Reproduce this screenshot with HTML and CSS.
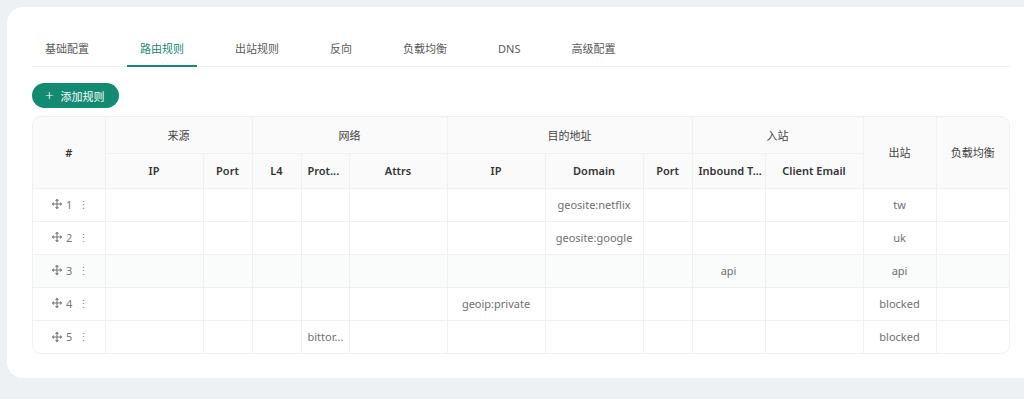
FILE: index.html
```html
<!DOCTYPE html>
<html lang="zh">
<head>
<meta charset="utf-8">
<link rel="stylesheet" href="styles.css">
</head>
<body>
<div class="card">
  <div class="tabs">
    <div class="tab">基础配置</div>
    <div class="tab active">路由规则</div>
    <div class="tab">出站规则</div>
    <div class="tab">反向</div>
    <div class="tab">负载均衡</div>
    <div class="tab">DNS</div>
    <div class="tab">高级配置</div>
  </div>
  <div class="toolbar">
    <button class="btn-add"><span class="plus">+</span>添加规则</button>
  </div>
  <div class="table-wrap">
    <table class="rules">
      <colgroup>
        <col style="width:72px"><col style="width:98px"><col style="width:49px">
        <col style="width:49px"><col style="width:48px"><col style="width:98px">
        <col style="width:98px"><col style="width:98px"><col style="width:49px">
        <col style="width:73px"><col style="width:98px"><col style="width:73px"><col style="width:73px">
      </colgroup>
      <thead>
        <tr class="h1">
          <th rowspan="2" class="hash">#</th>
          <th colspan="2">来源</th>
          <th colspan="3">网络</th>
          <th colspan="3">目的地址</th>
          <th colspan="2">入站</th>
          <th rowspan="2">出站</th>
          <th rowspan="2" class="last">负载均衡</th>
        </tr>
        <tr class="h2">
          <th>IP</th><th>Port</th><th>L4</th><th class="left">Prot...</th><th>Attrs</th>
          <th>IP</th><th>Domain</th><th>Port</th><th class="left">Inbound T...</th><th>Client Email</th>
        </tr>
      </thead>
      <tbody>
        <tr>
          <td class="idx"><span class="grp"><svg class="move" viewBox="0 0 10 10"><path d="M5 0.5V9.5M0.5 5H9.5"/><path d="M3.6 1.9L5 0.5L6.4 1.9M3.6 8.1L5 9.5L6.4 8.1M1.9 3.6L0.5 5L1.9 6.4M8.1 3.6L9.5 5L8.1 6.4"/></svg><span class="num">1</span><span class="dots">⋮</span></span></td>
          <td></td><td></td><td></td><td></td><td></td><td></td><td>geosite:netflix</td><td></td><td></td><td></td><td>tw</td><td class="last"></td>
        </tr>
        <tr>
          <td class="idx"><span class="grp"><svg class="move" viewBox="0 0 10 10"><path d="M5 0.5V9.5M0.5 5H9.5"/><path d="M3.6 1.9L5 0.5L6.4 1.9M3.6 8.1L5 9.5L6.4 8.1M1.9 3.6L0.5 5L1.9 6.4M8.1 3.6L9.5 5L8.1 6.4"/></svg><span class="num">2</span><span class="dots">⋮</span></span></td>
          <td></td><td></td><td></td><td></td><td></td><td></td><td>geosite:google</td><td></td><td></td><td></td><td>uk</td><td class="last"></td>
        </tr>
        <tr class="hover">
          <td class="idx"><span class="grp"><svg class="move" viewBox="0 0 10 10"><path d="M5 0.5V9.5M0.5 5H9.5"/><path d="M3.6 1.9L5 0.5L6.4 1.9M3.6 8.1L5 9.5L6.4 8.1M1.9 3.6L0.5 5L1.9 6.4M8.1 3.6L9.5 5L8.1 6.4"/></svg><span class="num">3</span><span class="dots">⋮</span></span></td>
          <td></td><td></td><td></td><td></td><td></td><td></td><td></td><td></td><td>api</td><td></td><td>api</td><td class="last"></td>
        </tr>
        <tr>
          <td class="idx"><span class="grp"><svg class="move" viewBox="0 0 10 10"><path d="M5 0.5V9.5M0.5 5H9.5"/><path d="M3.6 1.9L5 0.5L6.4 1.9M3.6 8.1L5 9.5L6.4 8.1M1.9 3.6L0.5 5L1.9 6.4M8.1 3.6L9.5 5L8.1 6.4"/></svg><span class="num">4</span><span class="dots">⋮</span></span></td>
          <td></td><td></td><td></td><td></td><td></td><td>geoip:private</td><td></td><td></td><td></td><td></td><td>blocked</td><td class="last"></td>
        </tr>
        <tr class="lastrow">
          <td class="idx"><span class="grp"><svg class="move" viewBox="0 0 10 10"><path d="M5 0.5V9.5M0.5 5H9.5"/><path d="M3.6 1.9L5 0.5L6.4 1.9M3.6 8.1L5 9.5L6.4 8.1M1.9 3.6L0.5 5L1.9 6.4M8.1 3.6L9.5 5L8.1 6.4"/></svg><span class="num">5</span><span class="dots">⋮</span></span></td>
          <td></td><td></td><td></td><td class="left">bittor...</td><td></td><td></td><td></td><td></td><td></td><td></td><td>blocked</td><td class="last"></td>
        </tr>
      </tbody>
    </table>
  </div>
</div>
</body>
</html>
```

FILE: styles.css
```css
* { box-sizing: border-box; }
html, body {
  margin: 0;
  padding: 0;
  background: #edf1f4;
  overflow: hidden;
  height: 399px;
}
body {
  font-family: "Noto Sans", "Noto Sans CJK SC", sans-serif;
  font-size: 11px;
  color: #555;
}
.card {
  margin: 7px 0 0 7px;
  width: 1040px;
  height: 371px;
  background: #fff;
  border-radius: 16px;
  padding: 25px 0 0 25px;
}
.tabs {
  display: flex;
  gap: 25px;
  width: 978px;
  height: 35px;
  border-bottom: 1px solid #eff0f1;
}
.tab {
  position: relative;
  padding: 0 13px;
  height: 34px;
  line-height: 34px;
  font-size: 11px;
  color: #5a5a5a;
  white-space: nowrap;
}
.tab.active {
  color: #148a73;
}
.tab.active::after {
  content: "";
  position: absolute;
  left: 0;
  right: 0;
  bottom: -1px;
  height: 2px;
  background: #148a73;
}
.toolbar {
  margin-top: 16px;
  height: 25px;
}
.btn-add {
  display: inline-flex;
  align-items: center;
  height: 25px;
  width: 87px;
  padding: 0 0 0 13px;
  border: none;
  border-radius: 13px;
  background: #138a72;
  color: #fff;
  font-family: "Noto Sans", "Noto Sans CJK SC", sans-serif;
  font-size: 11px;
}
.btn-add .plus {
  font-size: 15px;
  font-weight: 300;
  margin-right: 7px;
  line-height: 1;
}
.table-wrap {
  margin-top: 8px;
  width: 978px;
  border: 1px solid #eff0f1;
  border-radius: 9px;
  overflow: hidden;
}
.rules {
  width: 976px;
  table-layout: fixed;
  border-collapse: collapse;
}
.rules th, .rules td {
  border-right: 1px solid #f0f0f0;
  border-bottom: 1px solid #f0f0f0;
  text-align: center;
  padding: 0 6px;
  white-space: nowrap;
  overflow: hidden;
}
.rules th.last, .rules td.last { border-right: none; }
.rules tr.lastrow td { border-bottom: none; }
.rules th {
  background: #fafafa;
  color: #444;
  font-weight: 400;
  font-size: 11px;
}
.rules .h1 th { height: 36px; }
.rules .h2 th {
  height: 35px;
  font-weight: 600;
  color: #333;
}
.rules th.hash { font-weight: 600; color: #333; }
.rules td {
  height: 33px;
  color: #707070;
  font-size: 11px;
}
.rules td.idx { padding-left: 10px; }
.rules tr.hover td { background: #fafbfb; }
.left { text-align: left !important; }
.grp {
  display: inline-flex;
  align-items: center;
  color: #777;
}
.move {
  width: 10px;
  height: 10px;
  fill: none;
  stroke: #777;
  stroke-width: 1.1;
  margin-right: 4px;
}
.num { margin-right: 6px; }
.dots { color: #888; font-size: 11px; }
```
